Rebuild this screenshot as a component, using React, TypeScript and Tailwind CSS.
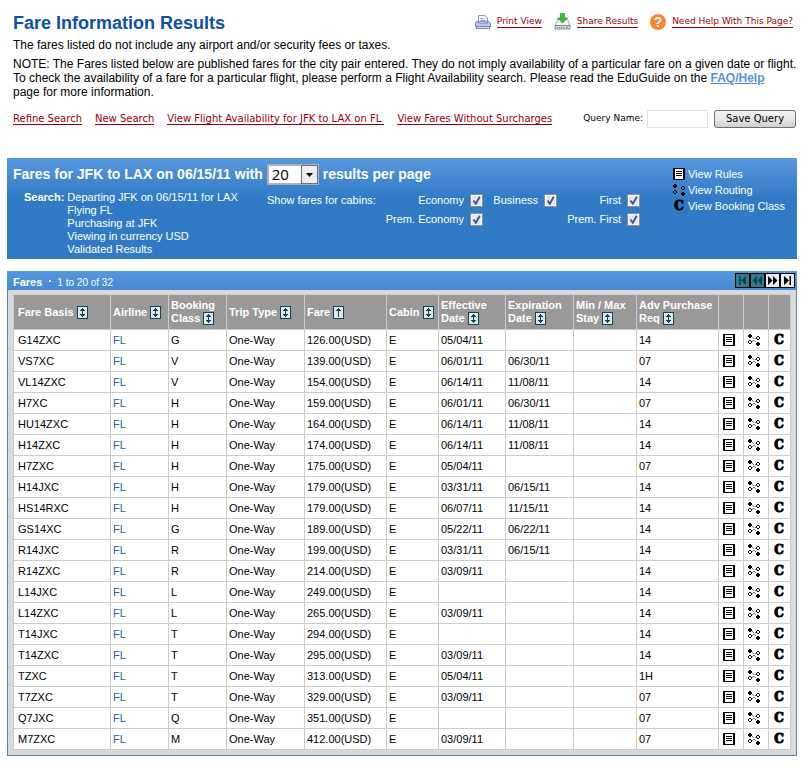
import type { ReactNode } from 'react';

const SANS = "font-['Liberation_Sans',Arial,sans-serif]";
const WIDE = "font-['DejaVu_Sans',Verdana,sans-serif]";

type Fare = [string, string, string, string, string, string];

// basis, booking class, amount, effective, expiration, advance purchase
const fares: Fare[] = [
  ['G14ZXC', 'G', '126.00', '05/04/11', '', '14'],
  ['VS7XC', 'V', '139.00', '06/01/11', '06/30/11', '07'],
  ['VL14ZXC', 'V', '154.00', '06/14/11', '11/08/11', '14'],
  ['H7XC', 'H', '159.00', '06/01/11', '06/30/11', '07'],
  ['HU14ZXC', 'H', '164.00', '06/14/11', '11/08/11', '14'],
  ['H14ZXC', 'H', '174.00', '06/14/11', '11/08/11', '14'],
  ['H7ZXC', 'H', '175.00', '05/04/11', '', '07'],
  ['H14JXC', 'H', '179.00', '03/31/11', '06/15/11', '14'],
  ['HS14RXC', 'H', '179.00', '06/07/11', '11/15/11', '14'],
  ['GS14XC', 'G', '189.00', '05/22/11', '06/22/11', '14'],
  ['R14JXC', 'R', '199.00', '03/31/11', '06/15/11', '14'],
  ['R14ZXC', 'R', '214.00', '03/09/11', '', '14'],
  ['L14JXC', 'L', '249.00', '', '', '14'],
  ['L14ZXC', 'L', '265.00', '03/09/11', '', '14'],
  ['T14JXC', 'T', '294.00', '', '', '14'],
  ['T14ZXC', 'T', '295.00', '03/09/11', '', '14'],
  ['TZXC', 'T', '313.00', '05/04/11', '', '1H'],
  ['T7ZXC', 'T', '329.00', '03/09/11', '', '07'],
  ['Q7JXC', 'Q', '351.00', '', '', '07'],
  ['M7ZXC', 'M', '412.00', '03/09/11', '', '07'],
];

const columns: { lines: string[]; width: string; sort?: 'both' | 'up' }[] = [
  { lines: ['Fare Basis'], width: 'w-[97px]', sort: 'both' },
  { lines: ['Airline'], width: 'w-[58px]', sort: 'both' },
  { lines: ['Booking', 'Class'], width: 'w-[58px]', sort: 'both' },
  { lines: ['Trip Type'], width: 'w-[78px]', sort: 'both' },
  { lines: ['Fare'], width: 'w-[82px]', sort: 'up' },
  { lines: ['Cabin'], width: 'w-[52px]', sort: 'both' },
  { lines: ['Effective', 'Date'], width: 'w-[67px]', sort: 'both' },
  { lines: ['Expiration', 'Date'], width: 'w-[68px]', sort: 'both' },
  { lines: ['Min / Max', 'Stay'], width: 'w-[63px]', sort: 'both' },
  { lines: ['Adv Purchase', 'Req'], width: 'w-[82px]', sort: 'both' },
  { lines: [], width: 'w-[25px]' },
  { lines: [], width: 'w-[25px]' },
  { lines: [], width: 'w-[22px]' },
];

function RulesIcon() {
  return (
    <svg width="12" height="12" viewBox="0 0 12 12" shapeRendering="crispEdges" className="block">
      <rect width="12" height="12" fill="#000" />
      <rect x="2" y="1" width="8" height="10" fill="#fff" />
      <path d="M3 3.5h6M3 5.5h6M3 7.5h6" stroke="#000" />
    </svg>
  );
}

function RoutingIcon() {
  return (
    <svg width="12" height="12" viewBox="0 0 12 12" shapeRendering="crispEdges" className="block">
      <path d="M4 3h1v1H4zM5 4h1v1H5zM6 6h1v1H6zM7 7h1v1H7zM8 4h1v1H8zM7 4h1v1H7zM5 6h1v1H5zM4 7h1v1H4z" fill="#777" />
      <path d="M1 0h2v1h1v2H3v1H1V3H0V1h1z" fill="#000" />
      <path d="M9 8h2v1h1v2h-1v1H9v-1H8V9h1z" fill="#000" />
      <path d="M9 2h2v1H9zM8 3h1v2H8zM11 3h1v2h-1zM9 5h2v1H9z" fill="#000" />
      <path d="M1 6h2v1H1zM0 7h1v2H0zM3 7h1v2H3zM1 9h2v1H1z" fill="#000" />
    </svg>
  );
}

function ClassIcon() {
  return (
    <span className="block w-3 text-center font-['DejaVu_Serif',serif] text-[12px] leading-3 font-bold text-black [-webkit-text-stroke:1px_black]">
      C
    </span>
  );
}

function SortButton({ kind, name }: { kind: 'both' | 'up'; name: string }) {
  return (
    <button type="button" aria-label={`Sort by ${name}`} className="ml-[3px] inline-block align-[-3px]">
      <svg width="11" height="13" viewBox="0 0 11 13" shapeRendering="crispEdges" className="block">
        <rect x="0.5" y="0.5" width="10" height="12" fill="#dfe6ef" stroke="#10454f" />
        {kind === 'both' ? (
          <path d="M5 2h1v1h1v1h1v1H6v3h2v1H7v1H6v1H5v-1H4V9H3V8h2V5H3V4h1V3h1z" fill="#10454f" />
        ) : (
          <path d="M5 2h1v1h1v1h1v1H6v6H5V5H3V4h1V3h1z" fill="#10454f" />
        )}
      </svg>
    </button>
  );
}

function PagerButton({ label, dim, children }: { label: string; dim?: boolean; children: ReactNode }) {
  return (
    <button type="button" aria-label={label} className={`h-[15px] w-[15px] border border-black ${dim ? 'bg-[#2f7d8c] text-[#0c3f4a]' : 'bg-[#e4eaf2] text-black'}`}>
      <svg width="13" height="13" viewBox="0 0 13 13" fill="currentColor" className="block">
        {children}
      </svg>
    </button>
  );
}

function Cabin({ label }: { label: string }) {
  return (
    <label className="flex items-center justify-end gap-1.5">
      {label}
      <span className="grid">
        <input type="checkbox" defaultChecked className="peer col-start-1 row-start-1 h-[13px] w-[13px] appearance-none border border-[#8e8f8f] bg-[#e4e7ee] shadow-[inset_0_0_0_1px_#f8f8f8]" />
        <svg width="13" height="13" viewBox="0 0 13 13" className="pointer-events-none invisible col-start-1 row-start-1 peer-checked:visible">
          <path d="M3.5 6.5l2.3 3.2L9.8 2.8" fill="none" stroke="#3f5597" strokeWidth="1.9" />
        </svg>
      </span>
    </label>
  );
}

function PrinterIcon() {
  return (
    <svg width="16" height="16" viewBox="0 0 16 16" className="block">
      <path d="M3.500 7.500V1.500h6.500l2.500 2.500v3.500z" fill="#f6f8fc" stroke="#8b97b3" />
      <path d="M5.500 4.500h4M5.500 6.500h5" stroke="#9aa6c0" />
      <path d="M1.500 7.500h2V9h9V7.500h1l2 2V13H.5V9z" fill="#b9caea" stroke="#6d83b4" />
      <path d="M1.500 12.500h13v2h-13z" fill="#dfe8f8" stroke="#6d83b4" />
    </svg>
  );
}

function DownloadIcon() {
  return (
    <svg width="17" height="17" viewBox="0 0 17 17" className="block">
      <path d="M3.500 6.500h10l2.500 6H1z" fill="#f1f3f4" stroke="#a5a9ac" />
      <path d="M1 12.500h15v3.500H1z" fill="#d8dbdd" stroke="#85898c" />
      <path d="M3 14.300h7" stroke="#777" strokeDasharray="1 1" />
      <path d="M12 14.300h2" stroke="#35a035" />
      <path d="M6.500 0.500h4V5h3l-5 5-5-5h3z" fill="#3dbb3d" stroke="#249a24" strokeWidth="0.7" />
    </svg>
  );
}

function HelpIcon() {
  return (
    <span aria-hidden="true" className="grid h-4 w-4 place-items-center rounded-full bg-[#ff8330] font-['Liberation_Sans',Arial,sans-serif] text-[14px] leading-4 font-bold text-white">
      ?
    </span>
  );
}

function TopLink({ icon, children }: { icon: ReactNode; children: ReactNode }) {
  return (
    <a href="#" className="flex items-center gap-1.5 text-[#900]">
      {icon}
      <span className="border-b border-[#900] leading-[11px]">{children}</span>
    </a>
  );
}

function TextLink({ children }: { children: ReactNode }) {
  return (
    <a href="#" className="border-b border-[#900] leading-[11px] whitespace-pre text-[#900]">
      {children}
    </a>
  );
}

export default function App() {
  return (
    <main className={`bg-white pt-[10px] pr-2 pb-3.5 pl-[7px] text-[11px] text-black ${SANS}`}>
      <header className="pl-1.5">
        <div className="flex items-start justify-between">
          <h1 className="text-[18px] leading-[26px] font-bold text-[#0c51a5]">Fare Information Results</h1>
          <nav aria-label="Page tools" className={`flex gap-3 pt-[3px] pr-1 text-[9px] ${WIDE}`}>
            <TopLink icon={<PrinterIcon />}>Print View</TopLink>
            <TopLink icon={<DownloadIcon />}>Share Results</TopLink>
            <TopLink icon={<HelpIcon />}>Need Help With This Page?</TopLink>
          </nav>
        </div>
        <div className="text-[12px] leading-[14px]">
          <p className="mt-0.5">The fares listed do not include any airport and/or security fees or taxes.</p>
          <p className="mt-[5px]">
            NOTE: The Fares listed below are published fares for the city pair entered. They do not imply availability of a particular fare on a given date or flight. To check the availability of a fare for a particular flight, please perform a Flight Availability search. Please read the EduGuide on the{' '}
            <a href="#" className="font-bold text-[#4f92d8] underline">FAQ/Help</a>
            <br />
            page for more information.
          </p>
        </div>
        <div className="mt-2.5 flex h-5 items-center justify-between">
          <nav aria-label="Search links" className={`flex gap-[13px] text-[10px] ${WIDE}`}>
            <TextLink>Refine Search</TextLink>
            <TextLink>New Search</TextLink>
            <TextLink>{'View Flight Availability for JFK to LAX on FL '}</TextLink>
            <TextLink>View Fares Without Surcharges</TextLink>
          </nav>
          <form className={`flex items-center pr-px ${WIDE}`}>
            <label htmlFor="query" className="mr-1 text-[9px]">Query Name:</label>
            <input id="query" className="mr-1.5 h-[18px] w-[61px] border border-[#e2e3ea] bg-white px-1 text-[10px]" />
            <button type="button" className="h-[18px] w-[82px] rounded-[3px] border border-[#707070] bg-linear-to-b from-[#f2f2f2] via-[#e8e8e8] to-[#cfcfcf] text-[10px] leading-4">
              Save Query
            </button>
          </form>
        </div>
      </header>

      <section className="mt-[29px] flex h-[101px] justify-between bg-[#317bc6] bg-linear-to-b from-[#5698de] to-[#317bc6] to-[40px] pt-1.5 pr-3 pl-1.5 text-white">
        <div>
          <div className="flex h-[21px] items-center text-[14px] font-bold">
            <label htmlFor="per-page">Fares for JFK to LAX on 06/15/11 with</label>
            <span className="mx-1 grid">
              <select id="per-page" defaultValue="20" className="col-start-1 row-start-1 h-[21px] w-[52px] appearance-none border-2 border-[#aeb1b5] bg-white pl-[3px] font-['Open_Sans',sans-serif] text-[15px] leading-[17px] font-normal text-black">
                <option>20</option>
                <option>50</option>
              </select>
              <svg width="17" height="19" viewBox="0 0 17 19" className="pointer-events-none col-start-1 row-start-1 mr-px self-center justify-self-end">
                <rect x="0.5" y="0.5" width="16" height="18" fill="#ececec" stroke="#6f7072" />
                <path d="M5 8h7l-3.500 4z" fill="#000" />
              </svg>
            </span>
            <span>results per page</span>
          </div>
          <div className="mt-1.5 flex leading-[13px]">
            <div className="flex w-[254px] gap-[3px] pl-[11px]">
              <strong>Search:</strong>
              <ul>
                <li>Departing JFK on 06/15/11 for LAX</li>
                <li>Flying FL</li>
                <li>Purchasing at JFK</li>
                <li>Viewing in currency USD</li>
                <li>Validated Results</li>
              </ul>
            </div>
            <fieldset className="mt-[3px] grid auto-rows-[13px] grid-cols-[110px_106px_74px_83px] items-center gap-y-1.5">
              <span>Show fares for cabins:</span>
              <Cabin label="Economy" />
              <Cabin label="Business" />
              <Cabin label="First" />
              <span />
              <Cabin label="Prem. Economy" />
              <span />
              <Cabin label="Prem. First" />
            </fieldset>
          </div>
        </div>
        <ul className="pt-0.5 leading-4">
          <li className="flex items-center gap-[3px]"><RulesIcon />View Rules</li>
          <li className="flex items-center gap-[3px]"><RoutingIcon />View Routing</li>
          <li className="flex items-center gap-[3px]"><ClassIcon />View Booking Class</li>
        </ul>
      </section>

      <section className="mt-3 border border-t-0 border-[#4a86bd] bg-[#d9d9d9]">
        <div className="-mx-px flex h-[19px] items-center justify-between bg-linear-to-b from-[#5698de] to-[#4489d2] pr-0.5 pl-1.5 text-white">
          <h2 className="flex items-center pt-1">
            <span className="text-[11px] font-bold">Fares</span>
            <span className="mr-1.5 ml-[7px] mb-1 h-0.5 w-0.5 bg-white" />
            <span className="text-[10px]">1 to 20 of 32</span>
          </h2>
          <div className="flex">
            <PagerButton label="First page" dim><path d="M3 2h1.500v9H3zM10 2v9L5 6.500z" /></PagerButton>
            <PagerButton label="Previous page" dim><path d="M6 2v9L1.500 6.500zM11 2v9L6.500 6.500z" /></PagerButton>
            <PagerButton label="Next page"><path d="M2 2v9l4.500-4.500zM7 2v9l4.500-4.500z" /></PagerButton>
            <PagerButton label="Last page"><path d="M3 2v9l5-4.500zM8.500 2H10v9H8.500z" /></PagerButton>
          </div>
        </div>
        <div className="p-[5px] pt-1">
          <table className="w-full table-fixed border-collapse bg-white">
            <thead>
              <tr className="h-[35px] bg-[#999] text-left leading-[13px] text-white">
                {columns.map((c, i) => (
                  <th key={i} className={`${c.width} border border-[#ccc] py-0 pr-0 whitespace-nowrap ${i === 0 ? 'pl-1' : 'pl-0.5'}`}>
                    {c.lines.length === 2 && <span className="block">{c.lines[0]}</span>}
                    {c.lines[c.lines.length - 1]}
                    {c.sort && <SortButton kind={c.sort} name={c.lines.join(' ')} />}
                  </th>
                ))}
              </tr>
            </thead>
            <tbody>
              {fares.map(([basis, cls, amount, eff, exp, adv]) => (
                <tr key={basis} className="h-[21px] leading-[13px] *:border *:border-[#ccc] *:py-0 *:pr-0 *:pl-0.5">
                  <td><span className="pl-0.5">{basis}</span></td>
                  <td><a href="#" className="text-[#2460a5]">FL</a></td>
                  <td>{cls}</td>
                  <td>One-Way</td>
                  <td>{amount}(USD)</td>
                  <td>E</td>
                  <td>{eff}</td>
                  <td>{exp}</td>
                  <td />
                  <td>{adv}</td>
                  <td><a href="#" aria-label={`View rules for ${basis}`} className="ml-0.5 block w-3"><RulesIcon /></a></td>
                  <td><a href="#" aria-label={`View routing for ${basis}`} className="ml-0.5 block w-3"><RoutingIcon /></a></td>
                  <td><a href="#" aria-label={`View booking class for ${basis}`} className="ml-0.5 block w-3"><ClassIcon /></a></td>
                </tr>
              ))}
            </tbody>
          </table>
        </div>
      </section>
    </main>
  );
}
